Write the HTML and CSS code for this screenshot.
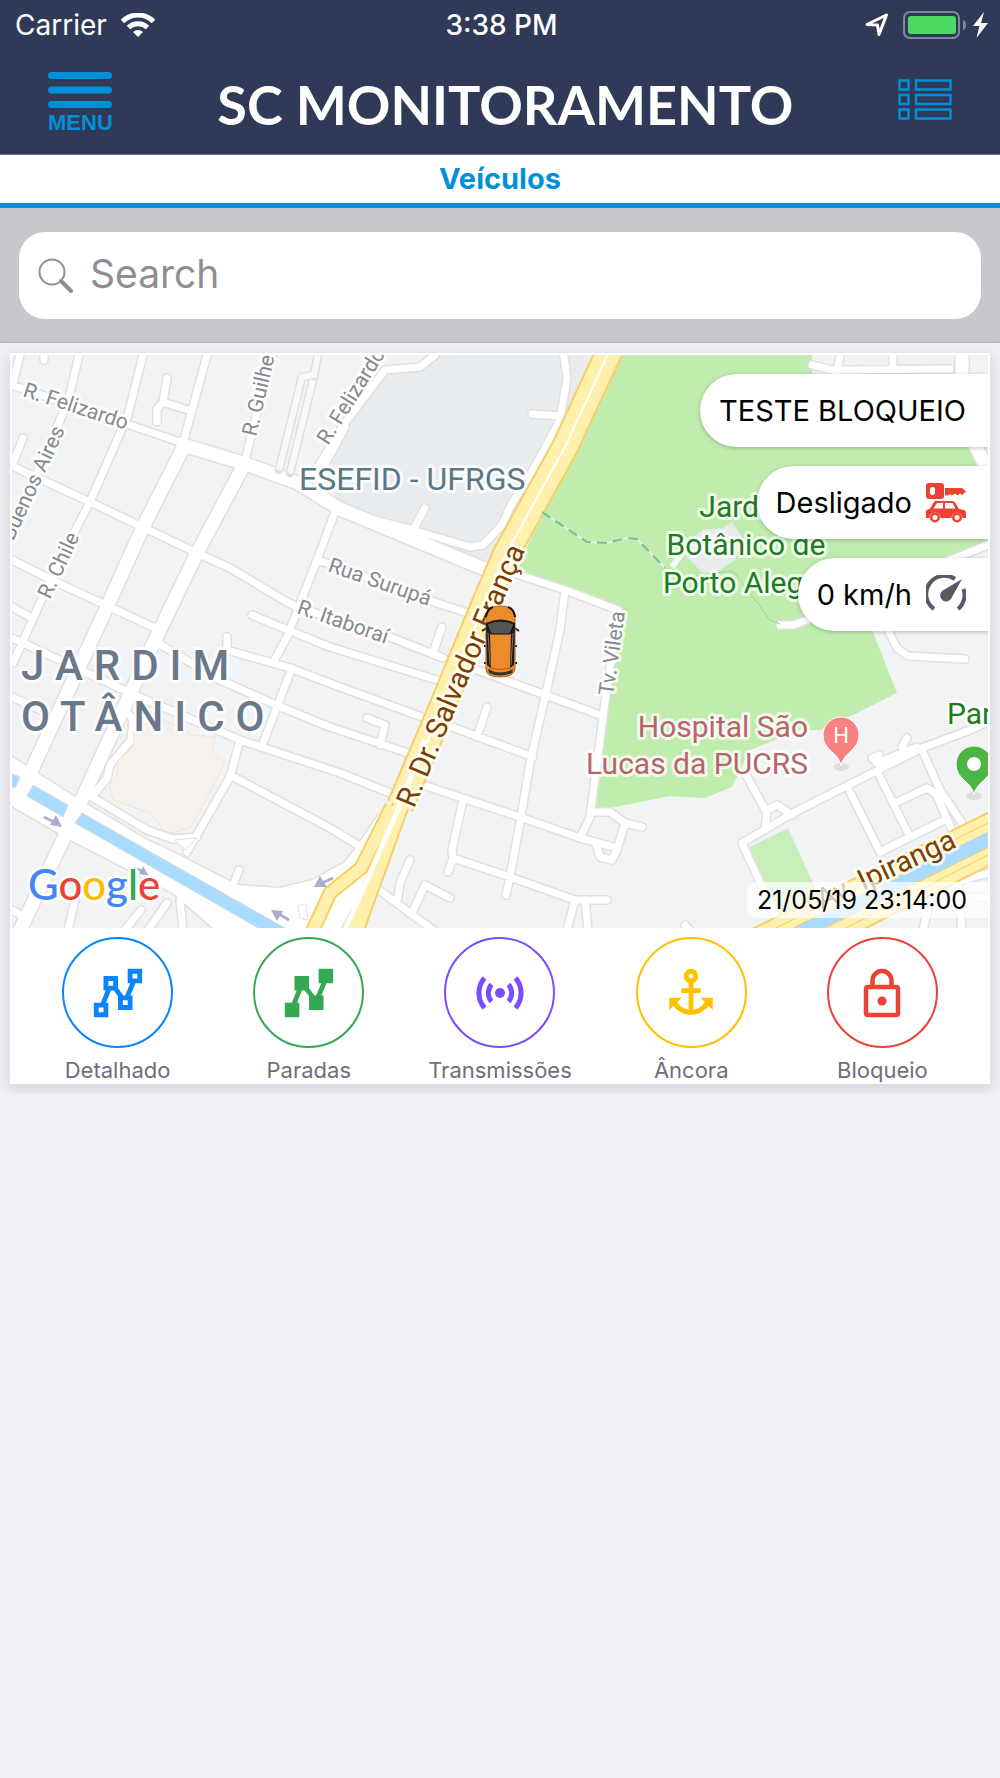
FILE: index.html
```html
<!DOCTYPE html>
<html lang="pt-BR">
<head>
    <meta charset="utf-8">
    <meta name="viewport" content="width=device-width, initial-scale=1">
    <title>SC Monitoramento</title>
    <link rel="stylesheet" href="styles.css">
</head>
<body>
    <header class="header">
        <div class="status-bar">
            <div class="status-left">
                <span>Carrier</span>
                <svg class="wifi" viewBox="0 0 34 24" aria-hidden="true">
                    <g fill="none" stroke="#fff" stroke-width="5">
                        <path d="M1.500 8.500a22 22 0 0 1 31 0"/>
                        <path d="M7.500 14.500a14 14 0 0 1 19 0"/>
                    </g>
                    <path d="M17 24l-5-5a7.500 7.500 0 0 1 10 0z" fill="#fff"/>
                </svg>
            </div>
            <span class="time">3:38 PM</span>
            <div class="status-right">
                <svg width="24" height="24" viewBox="0 0 24 24" aria-hidden="true">
                    <path d="M2 11.500L21.500 2 14 21.500 12.500 12z" fill="none" stroke="#fff" stroke-width="3" stroke-linejoin="round"/>
                </svg>
                <svg width="64" height="28" viewBox="0 0 64 28" aria-hidden="true">
                    <rect x="1" y="1" width="55" height="26" rx="6" fill="none" stroke="#838899" stroke-width="2"/>
                    <rect x="5" y="5" width="48" height="18" rx="3" fill="#4cd964"/>
                    <path d="M60 9c4 1 4 9 0 10z" fill="#838899"/>
                </svg>
                <svg width="15" height="26" viewBox="0 0 15 26" aria-hidden="true">
                    <path d="M11 0L0 14h6.500L3.500 26 15 11H8z" fill="#fff"/>
                </svg>
            </div>
        </div>
        <div class="nav-bar">
            <button type="button" class="menu-button">
                <svg width="64" height="36" viewBox="0 0 64 36" aria-hidden="true">
                    <path d="M3.500 3.500h57M3.500 18h57M3.500 32.500h57" stroke="#0090d8" stroke-width="7" stroke-linecap="round"/>
                </svg>
                MENU
            </button>
            <h1>SC MONITORAMENTO</h1>
            <button type="button" class="list-button" aria-label="Lista">
                <svg width="54" height="42" viewBox="0 0 54 42" fill="none" stroke="#0090d8" stroke-width="2.500" aria-hidden="true">
                    <path d="M1.500 1.500h9v9h-9zM18 1.500h34.500v9H18zM1.500 16h9v9h-9zM18 16h34.500v9H18zM1.500 30.500h9v9h-9zM18 30.500h34.500v9H18z"/>
                </svg>
            </button>
        </div>
    </header>

    <h2 class="tab">Veículos</h2>

    <form class="search" role="search">
        <label class="search-box">
            <svg width="35" height="35" viewBox="0 0 35 35" fill="none" stroke="#8e8e93" aria-hidden="true">
                <circle cx="14" cy="14" r="12.500" stroke-width="2"/>
                <path d="M23 23l10 10" stroke-width="4" stroke-linecap="round"/>
            </svg>
            <input type="search" placeholder="Search" aria-label="Search">
        </label>
    </form>

    <main class="card">
        <div class="map">
            <svg class="map-drawing" viewBox="12 355 976 573" role="img" aria-label="Mapa do veículo">
                <defs>
                    <path id="streets" d="M20 355L13 384M44 345V360M12 385L183 443M79 355L68 402 37 473 12 523M143 355L128 415 90 502 77 527 40 603 13 663M207 355L183 443M167 378L163 402 188 410M163 402L157 409V422M272 355L245 460M23 438L13 463M12 466L90 502 197 553 230 568 287 602 297 607 390 637 443 658M12 560L58 583 153 627M12 607L30 617M12 638L23 643 130 693 240 740 340 773 390 793M12 697L45 712M158 643L220 680 283 708 330 727 408 753M227 637V650L290 668 340 687 422 717M227 650L219 664 222 680M252 615L288 630 330 647 437 680M335 512L317 560 287 637 273 663M292 668L263 743M318 560L360 575 437 603 465 612M240 740L230 777 187 852M230 775L330 828 358 845M435 355L420 367 385 370 342 427 313 475M345 427L322 470M563 350L567 378 560 420 537 463 510 507 502 525 483 545 470 547 413 530 363 517M532 414L560 416M425 508L413 530M513 573L565 590 618 610M565 590L560 630 545 697 530 763 521 817 510 877 506 895M618 610L607 687 597 763 590 817 580 838M442 627L433 653M477 670L600 715M452 727L533 757M487 707L477 737M423 785L520 817 580 838 617 848M463 800L452 850 453 858 448 872M453 858L510 877 575 900H607M575 900L567 930M585 900L588 930M367 718L385 725 380 745M410 860L400 883 398 898M375 887L433 930M412 913L425 885 450 898M590 812H610L625 823 642 827M625 823L617 850 612 860 600 857 596 845M128 713L133 720 131 740 110 765 107 778 92 797M92 797L147 830 173 839 197 837M239 870L233 885M75 900L68 930M12 910L26 918M141 910L125 930M167 903L148 930M180 900L183 930M812 365L833 370 950 369M840 355L837 373M893 355V366M888 630L897 648 908 656 965 659M988 722L970 730 922 748 793 813 742 843 777 920M745 773L767 813 765 830M767 810L777 805 792 815M879 755L872 758 877 763 917 747M907 738L902 747M922 750L940 790 962 823M850 792L880 852 910 837 945 820M878 773L910 837M895 803L927 788 936 794 953 832M957 870L962 930M990 873L962 880M962 897H990M915 905L927 913 923 930M685 925L690 930M780 625H793L807 620M988 545L945 562 890 590"/>
                    <path id="avenues" d="M183 445L243 463 298 483 340 509 487 570M183 448L143 527 107 607 33 767 18 800M245 463L197 553 155 640 115 727 64 838 20 930M962 350V375M968 430L985 465"/>
                    <path id="canal-roads" d="M12 757L75 797 147 840 173 852 237 885 280 888 313 880 345 862 358 845 378 815 398 820 340 930H215L173 893 67 838 12 806Z"/>
                    <path id="salvador" d="M610 350L565 447 506 554 482 610 440 712 400 806"/>
                    <path id="salvador-left" d="M392 806L361 868 330 893 312 932"/>
                    <path id="salvador-right" d="M402 802L355 932"/>
                    <path id="salvador-name" d="M414 809L463 692 536 526"/>
                </defs>

                <rect x="12" y="355" width="976" height="573" fill="#f1f3f4"/>
                <path fill="#e8ecef" d="M435 355H598L550 447 486 566 340 505 322 470 345 427 385 371 420 367Z"/>
                <path fill="#c0ecae" d="M623 355H812V374H962L978 467 988 490V540L872 592V630L897 693 853 715 820 730H800L750 750 732 787 705 798 670 796 610 808H593L620 612 515 570 578 447Z"/>
                <path fill="#f1f3f4" d="M812 355H988V470L965 440V374H812ZM988 540L868 590 872 630H988Z"/>
                <path fill="#c8efb9" d="M750 847L788 828 825 910 777 915Z"/>
                <path fill="#e8eaeb" d="M687 557L690 540 703 530 723 528 732 522 742 537 735 560 720 570 703 573Z"/>

                <!-- roads: grey casing below, white fill on top -->
                <g class="casing">
                    <use href="#canal-roads" stroke-width="3"/>
                    <use href="#streets" stroke-width="10"/>
                    <use href="#avenues" stroke-width="16"/>
                </g>
                <use href="#canal-roads" fill="#fff"/>
                <g class="road">
                    <use href="#streets" stroke-width="7"/>
                    <use href="#avenues" stroke-width="13"/>
                </g>
                <g class="casing" stroke-width="9"><path d="M318 355L314 375 302 377 279 470M313 380L290 473"/></g>
                <g fill="none" stroke="#f8f9fa" stroke-width="6"><path d="M318 355L314 375 302 377 279 470M313 380L290 473"/></g>

                <path fill="#f5f2ee" stroke="#f5e3d0" d="M133 730L160 718 193 735 215 737 212 753 224 762 218 777 191 827 173 833 163 830 150 813 140 810 123 803 113 800 109 785 117 778 118 760 127 753 134 742Z"/>
                <path fill="#fff" stroke="#e2e2e2" d="M174 840L197 838 186 850ZM298 906L306 904 308 920 300 918Z"/>
                <g fill="#a9daff" stroke="#dcdcdc" stroke-width="1">
                    <path d="M10 773L20 777 15 788 10 786ZM33 785L68 805 63 817 27 796ZM82 813L292 932H265L75 823Z"/>
                </g>

                <!-- Av. Ipiranga and the canal beside it -->
                <path fill="#fff0ad" stroke="#f8cf62" stroke-width="2" d="M992 811V831L790 930H750ZM992 845V864L862 930H820Z"/>
                <path fill="#a9daff" d="M992 830V845L820 930H790Z"/>
                <path fill="none" stroke="#f8cf62" stroke-width="1" d="M990 822L772 930M990 854L842 930"/>

                <g fill="none">
                    <g stroke="#f8cf62">
                        <use href="#salvador" stroke-width="28"/>
                        <use href="#salvador-left" stroke-width="15"/>
                        <use href="#salvador-right" stroke-width="18"/>
                    </g>
                    <g stroke="#fff0ad">
                        <use href="#salvador" stroke-width="24"/>
                        <use href="#salvador-left" stroke-width="11"/>
                        <use href="#salvador-right" stroke-width="14"/>
                    </g>
                    <use href="#salvador" stroke="#fff" stroke-width="2"/>
                    <path d="M425 740L397 812 345 930" stroke="#fff" stroke-width="5"/>
                    <path d="M542 512L587 542 607 543 627 538 637 539 665 568" stroke="#ecebf0" stroke-width="2"/>
                    <path d="M542 512L587 542 607 543 627 538 637 539 665 568" stroke="#74c38c" stroke-width="2" stroke-dasharray="10 6"/>
                    <path d="M690 577L730 571 736 574 770 620 780 624" stroke="#9ccfa4"/>
                    <path d="M672 567L686 548" stroke="#f8f9fa" stroke-width="6"/>
                </g>

                <g fill="#a9aecb" stroke="#a9aecb" stroke-width="3">
                    <path d="M44 817L54 822M333 878L322 883M289 920L279 914M133 867L142 871"/>
                    <path stroke="none" d="M56 815L62 827 50 825ZM320 876L314 887 327 887ZM271 910L283 911 277 921ZM143 866L149 876 139 874Z"/>
                </g>

                <g class="street-name">
                    <text transform="translate(22 396) rotate(18)">R. Felizardo</text>
                    <text transform="translate(65 430) rotate(-65)" text-anchor="end">Buenos Aires</text>
                    <text transform="translate(50 600) rotate(-65)">R. Chile</text>
                    <text transform="translate(256 437) rotate(-77)">R. Guilhe</text>
                    <text transform="translate(328 446) rotate(-58)">R. Felizardo</text>
                    <text transform="translate(327 571) rotate(19)">Rua Surupá</text>
                    <text transform="translate(296 613) rotate(19)">R. Itaboraí</text>
                    <text transform="translate(613 696) rotate(-82)">Tv. Vileta</text>
                </g>
                <g class="road-name">
                    <text><textPath href="#salvador-name">R. Dr. Salvador França</textPath></text>
                    <text transform="translate(822 910) rotate(-25)">Av. Ipiranga</text>
                </g>
                <text class="campus" x="299" y="490">ESEFID - UFRGS</text>
                <g class="place" fill="#1b7d1e" text-anchor="middle">
                    <text x="746" y="517">Jardim</text>
                    <text x="746" y="555">Botânico de</text>
                    <text x="746" y="593">Porto Alegre</text>
                </g>
                <text class="place" x="947" y="724" fill="#1b7d1e">Par</text>
                <g class="place" fill="#b8646a" text-anchor="end">
                    <text x="808" y="737">Hospital São</text>
                    <text x="808" y="774">Lucas da PUCRS</text>
                </g>
                <g class="district">
                    <text x="21" y="680">JARDIM</text>
                    <text x="21" y="731">OTÂNICO</text>
                </g>

                <ellipse cx="841" cy="767" rx="8" ry="4" fill="#dcdfe0"/>
                <path d="M841 766C839 752 823 751 823 735a18 18 0 0 1 36 0C859 751 843 752 841 766Z" fill="#f98181" stroke="#fff"/>
                <text class="pin-letter" x="841" y="743">H</text>
                <ellipse cx="974" cy="796" rx="8" ry="4" fill="#dcdfe0"/>
                <path d="M974 795C972 781 956 780 956 764a18 18 0 0 1 36 0C992 780 976 781 974 795Z" fill="#4db546" stroke="#fff"/>
                <circle cx="974" cy="764" r="7" fill="#fff"/>

                <!-- tracked car -->
                <g>
                    <path d="M482 631l6-4M519 631l-6-4M484 646h33M484 663h33" stroke="#222" stroke-width="2"/>
                    <path d="M486 614Q488 606 500 606T515 614V668Q515 677 500 677T486 668Z" fill="#ed8a2b" stroke="#a96522"/>
                    <path d="M486 617Q487 609 493 607M515 617Q514 609 508 607" fill="none" stroke="#111" stroke-width="2"/>
                    <path d="M486 623Q500 616 515 623L514 665 510 668 511 634H490L491 668 487 665Z" fill="#1c1c1c"/>
                    <path d="M487 624Q500 618 514 624L510 634H491Z" fill="#555" stroke="#111"/>
                    <path d="M488 633L490 665M513 633L511 665" stroke="#777"/>
                    <path d="M491 635H510L509 666H492Z" fill="#ed8a2b"/>
                    <path d="M488 669Q500 676 513 669L512 673Q500 678 489 673Z" fill="#333"/>
                    <path d="M490 668Q500 671 511 668" fill="none" stroke="#a96522"/>
                </g>

                <text class="google" x="28" y="900"><tspan fill="#4285f4">G</tspan><tspan fill="#ea4335">o</tspan><tspan fill="#fbbc05">o</tspan><tspan fill="#4285f4">g</tspan><tspan fill="#34a853">l</tspan><tspan fill="#ea4335">e</tspan></text>
            </svg>

            <div class="badges">
                <div class="badge">TESTE BLOQUEIO</div>
                <div class="badge">
                    Desligado
                    <svg width="40" height="40" viewBox="0 0 40 40" fill="#ec4234" aria-hidden="true">
                        <path fill-rule="evenodd" d="M3 0h12q3 0 3 3v10q0 3-3 3H3q-3 0-3-3V3q0-3 3-3zM6 4Q4 4 4 6v4q0 2 2 2h1q2 0 2-2V6q0-2-2-2z"/>
                        <path d="M19 5h17l4 3.500-4 3.500-2-1.500-2 2-3-2-3 2-2-1.500-2 1.500H19z"/>
                        <path fill-rule="evenodd" d="M11 18h15q2 0 3 1.500l4 6.500 5 1q2 .5 2 2.500v5.500h-3.500a5.500 5.500 0 0 0-11 0H14.500a5.500 5.500 0 0 0-11 0H0v-7.500l4-2 4-6.500q1-1.500 3-1.500zM11 20l-3.500 5.500H17V20zM19 20v5.500h10.500L26.500 20z"/>
                        <path fill-rule="evenodd" d="M9 29.500a5 5 0 1 0 0 10 5 5 0 0 0 0-10zM9 32a2.500 2.500 0 1 1 0 5 2.500 2.500 0 0 1 0-5zM31 29.500a5 5 0 1 0 0 10 5 5 0 0 0 0-10zM31 32a2.500 2.500 0 1 1 0 5 2.500 2.500 0 0 1 0-5z"/>
                    </svg>
                </div>
                <div class="badge">
                    0 km/h
                    <svg width="40" height="40" viewBox="0 0 40 40" aria-hidden="true">
                        <path d="M8 34A18 18 0 0 1 29 4M37.500 14A18 18 0 0 1 32 34" fill="none" stroke="#565b66" stroke-width="4"/>
                        <path d="M36 4L25.500 23A6 6 0 1 1 16 16Z" fill="#565b66"/>
                    </svg>
                </div>
            </div>
            <time class="timestamp" datetime="2019-05-21T23:14:00">21/05/19 23:14:00</time>
        </div>

        <div class="actions">
            <button type="button" class="action">
                <span class="action-icon blue">
                    <svg viewBox="0 0 24 24" fill="currentColor" aria-hidden="true"><path d="M16 2V8H17.080L14.950 13H14.260L12 9.970V5H6V11H6.910L4.880 16H2V22H8V16H7.040L9.070 11H10.270L12 13.320V19H18V13H17.120L19.250 8H22V2M18 4H20V6H18M8 7H10V9H8M14 15H16V17H14M4 18H6V20H4"/></svg>
                </span>
                Detalhado
            </button>
            <button type="button" class="action">
                <span class="action-icon green">
                    <svg viewBox="0 0 24 24" fill="currentColor" aria-hidden="true"><path d="M16 2V8H17.080L14.950 13H14.260L12 9.970V5H6V11H6.910L4.880 16H2V22H8V16H7.040L9.070 11H10.270L12 13.320V19H18V13H17.120L19.250 8H22V2"/></svg>
                </span>
                Paradas
            </button>
            <button type="button" class="action">
                <span class="action-icon purple">
                    <svg viewBox="0 0 58 58" aria-hidden="true">
                        <circle cx="29" cy="29" r="5" fill="currentColor"/>
                        <path d="M13.500 14A23 23 0 0 0 13.500 44M44.500 14A23 23 0 0 1 44.500 44M20.500 20.500A13 13 0 0 0 20.500 37.500M37.500 20.500A13 13 0 0 1 37.500 37.500" fill="none" stroke="currentColor" stroke-width="5"/>
                    </svg>
                </span>
                Transmissões
            </button>
            <button type="button" class="action">
                <span class="action-icon yellow">
                    <svg viewBox="0 0 24 24" fill="currentColor" aria-hidden="true"><path d="M12 2A3 3 0 0 0 9 5C9 6.270 9.800 7.400 11 7.830V10H8V12H11V18.920C9.160 18.630 7.190 17.380 6.240 15.860L8 14H3V19L4.770 17.230C6.290 19.500 9.190 21 12 21C14.810 21 17.710 19.500 19.230 17.230L21 19V14H16L17.760 15.860C16.810 17.380 14.840 18.630 13 18.920V12H16V10H13V7.830C14.200 7.400 15 6.270 15 5A3 3 0 0 0 12 2M12 4A1 1 0 0 1 13 5A1 1 0 0 1 12 6A1 1 0 0 1 11 5A1 1 0 0 1 12 4Z"/></svg>
                </span>
                Âncora
            </button>
            <button type="button" class="action">
                <span class="action-icon red">
                    <svg viewBox="0 0 58 58" aria-hidden="true">
                        <path d="M15 23H43Q45 23 45 25V49Q45 51 43 51H15Q13 51 13 49V25Q13 23 15 23ZM19.500 23V16.500A9.500 9.500 0 0 1 38.500 16.500V23" fill="none" stroke="currentColor" stroke-width="4.500"/>
                        <circle cx="29" cy="37" r="4.500" fill="currentColor"/>
                    </svg>
                </span>
                Bloqueio
            </button>
        </div>
    </main>
</body>
</html>
```
FILE: styles.css
```css
* {
    box-sizing: border-box;
}
body {
    margin: 0;
    background-color: #efeff4;
    font-family: Inter, "Liberation Sans", sans-serif;
    color: #000;
}
button {
    border: none;
    background: none;
    padding: 0;
    font-family: inherit;
    cursor: pointer;
}
svg {
    display: block;
}

/* header */
.header {
    background-color: #303a58;
    color: #fff;
    border-bottom: 1px solid #6d748a;
}
.status-bar {
    display: grid;
    grid-template-columns: 1fr auto 1fr;
    align-items: center;
    height: 50px;
    padding: 0 12px 0 15px;
    font-size: 28px;
}
.status-left, .status-right {
    display: flex;
    align-items: center;
    gap: 14px;
}
.status-right {
    justify-content: flex-end;
    gap: 6px;
}
.status-right svg:first-child {
    margin-right: 8px;
}
.wifi {
    width: 34px;
    height: 24px;
}
.time {
    font-weight: 500;
}
.nav-bar {
    display: flex;
    justify-content: space-between;
    align-items: flex-start;
    height: 104px;
    padding: 22px 48px 0;
}
.nav-bar h1 {
    margin: 0;
    font: bold 54px/66px Lato, sans-serif;
}
.menu-button {
    color: #0090d8;
    font: bold 22px/30px "Liberation Sans", sans-serif;
}
.list-button {
    padding-top: 7px;
}

/* tab and search */
.tab {
    margin: 0;
    background-color: #fff;
    border-bottom: 5px solid #0090d8;
    color: #0090d8;
    font-size: 29px;
    line-height: 48px;
    text-align: center;
}
.search {
    background-color: #c8c7cd;
    border-bottom: 1px solid #b4b3b9;
    padding: 24px 19px 23px;
}
.search-box {
    display: flex;
    align-items: center;
    gap: 17px;
    height: 87px;
    padding: 0 19px;
    background-color: #fff;
    border-radius: 26px;
}
.search-box input {
    flex: 1;
    min-width: 0;
    border: none;
    outline: none;
    padding: 0 0 4px;
    background: none;
    font: 39px Inter, sans-serif;
}
.search-box input::placeholder {
    color: #8e8e93;
    opacity: 1;
}

/* vehicle card */
.card {
    margin: 10px;
    padding: 2px 2px 0;
    background-color: #fff;
    box-shadow: 0 4px 14px rgba(60, 60, 80, .18);
}
.map {
    position: relative;
    overflow: hidden;
}
.map-drawing {
    width: 100%;
    height: auto;
}
.casing {
    fill: none;
    stroke: #e0e0e0;
    stroke-linecap: round;
    stroke-linejoin: round;
}
.road {
    fill: none;
    stroke: #fff;
    stroke-linecap: round;
    stroke-linejoin: round;
}
.street-name, .road-name, .place, .campus, .district, .google {
    font-family: Roboto, sans-serif;
    paint-order: stroke;
    stroke: rgba(255, 255, 255, .75);
    stroke-width: 6px;
    stroke-linejoin: round;
}
.street-name {
    font-size: 21px;
    fill: #85898d;
}
.road-name {
    font-size: 29px;
    fill: #7b3f00;
}
.place {
    font-size: 30px;
}
.campus {
    font-size: 32px;
    fill: #5c7886;
}
.district {
    font-size: 42px;
    font-weight: 500;
    letter-spacing: 11px;
    fill: #69798a;
}
.google {
    font: 500 42px Lato, sans-serif;
}
.pin-letter {
    font: 22px Roboto, sans-serif;
    fill: #fff;
    text-anchor: middle;
}

/* labels over the map */
.badges {
    position: absolute;
    top: 19px;
    right: 0;
    display: flex;
    flex-direction: column;
    align-items: flex-end;
    gap: 19px;
}
.badge {
    display: flex;
    align-items: center;
    gap: 14px;
    height: 73px;
    padding: 0 22px 0 19px;
    background-color: #fff;
    border-radius: 37px 0 0 37px;
    box-shadow: 0 1px 4px rgba(0, 0, 0, .25);
    font-size: 29px;
}
.timestamp {
    position: absolute;
    right: 0;
    bottom: 10px;
    padding: 0 21px 0 10px;
    background-color: rgba(255, 255, 255, .7);
    border-radius: 8px 0 0 8px;
    font-size: 25px;
    line-height: 36px;
}

/* actions */
.actions {
    display: grid;
    grid-template-columns: repeat(5, 1fr);
    padding: 9px 10px 0;
}
.action {
    display: flex;
    flex-direction: column;
    align-items: center;
    gap: 8px;
    color: #6d7078;
    font-size: 22px;
    line-height: 28px;
}
.action-icon {
    display: flex;
    align-items: center;
    justify-content: center;
    width: 111px;
    height: 111px;
    border: 2px solid;
    border-radius: 50%;
}
.action-icon svg {
    width: 58px;
    height: 58px;
}
.blue {
    color: #0a84ff;
}
.green {
    color: #34a853;
}
.purple {
    color: #7c4dff;
}
.yellow {
    color: #ffc000;
}
.red {
    color: #ec4234;
}
```
